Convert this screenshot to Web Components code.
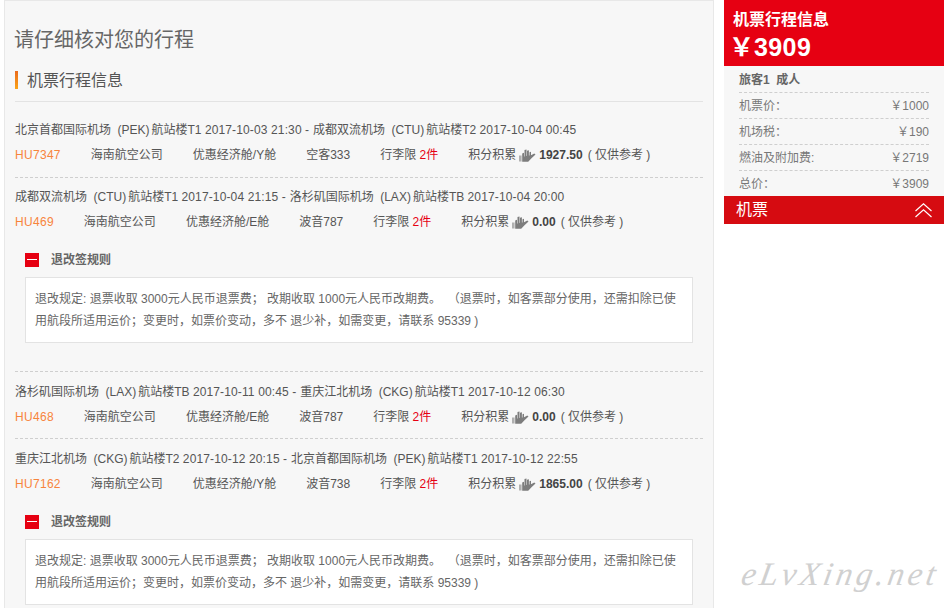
<!DOCTYPE html>
<html lang="zh-CN">
<head>
<meta charset="utf-8">
<style>
html,body{margin:0;padding:0;background:#fff;height:608px;overflow:hidden}
body{font:12px/24px "Liberation Sans","Noto Sans CJK SC",sans-serif;color:#555;text-spacing-trim:space-all}
</style>
</head>
<body>
<trip-page>
  <trip-panel slot="main">
    <flight-seg from="北京首都国际机场" fromcode="(PEK)" fromt="航站楼T1 2017-10-03 21:30 -" to="成都双流机场" tocode="(CTU)" tot="航站楼T2 2017-10-04 00:45" no="HU7347" cabin="优惠经济舱/Y舱" plane="空客333" miles="1927.50"></flight-seg>
    <flight-seg from="成都双流机场" fromcode="(CTU)" fromt="航站楼T1 2017-10-04 21:15 -" to="洛杉矶国际机场" tocode="(LAX)" tot="航站楼TB 2017-10-04 20:00" no="HU469" cabin="优惠经济舱/E舱" plane="波音787" miles="0.00">
      <rule-box></rule-box>
    </flight-seg>
    <flight-seg style="--pt:8px;--end:9px" from="洛杉矶国际机场" fromcode="(LAX)" fromt="航站楼TB 2017-10-11 00:45 -" to="重庆江北机场" tocode="(CKG)" tot="航站楼T1 2017-10-12 06:30" no="HU468" cabin="优惠经济舱/E舱" plane="波音787" miles="0.00"></flight-seg>
    <flight-seg style="--pt:8px" from="重庆江北机场" fromcode="(CKG)" fromt="航站楼T2 2017-10-12 20:15 -" to="北京首都国际机场" tocode="(PEK)" tot="航站楼T1 2017-10-12 22:55" no="HU7162" cabin="优惠经济舱/Y舱" plane="波音738" miles="1865.00">
      <rule-box></rule-box>
    </flight-seg>
  </trip-panel>
  <price-side slot="side">
    <price-row label="机票价：" value="￥1000"></price-row>
    <price-row label="机场税：" value="￥190"></price-row>
    <price-row label="燃油及附加费:" value="￥2719"></price-row>
    <price-row label="总价：" value="￥3909"></price-row>
  </price-side>
  <water-mark slot="mark"></water-mark>
</trip-page>
<script>
function def(name, html){
  customElements.define(name, class extends HTMLElement{
    connectedCallback(){
      if(this.shadowRoot) return;
      const a = k => this.getAttribute(k) || '';
      this.attachShadow({mode:'open'}).innerHTML = html(a, this);
    }
  });
}
const dated = s => s.replace(/(\d{4}-.*)$/, '<em>$1</em>');
def('trip-page', () => `<style>
:host{display:flex;align-items:flex-start;padding-left:4px;width:947px;height:608px;overflow:hidden;box-sizing:border-box;position:relative}
.m{flex:none;width:710px}.s{flex:none;width:220px;margin-left:10px}
</style><div class="m"><slot name="main"></slot></div><div class="s"><slot name="side"></slot></div><slot name="mark"></slot>`);

def('trip-panel', () => `<style>
:host{display:block;box-sizing:border-box;width:710px;height:608px;background:#f7f7f7;border:1px solid #e8e8e8;border-bottom:0;padding:22px 10px 0}
h1{margin:0;padding-top:1px;height:32px;box-sizing:border-box;font-weight:400;font-size:20px;line-height:32px;color:#666;margin-left:-1px}
h2{margin:16px 0 0;padding:0 0 12px;font-weight:400;font-size:16px;line-height:18px;color:#555;border-bottom:1px solid #e3e3e3;display:flex;align-items:center}
h2 i{display:block;width:3px;height:18px;margin-right:9px;background:linear-gradient(#ea6a1c,#fba419)}
h2 span{padding-top:2px;height:18px;box-sizing:border-box;line-height:16px;margin-top:0}
.gap{height:9px}
</style><h1>请仔细核对您的行程</h1><h2><i></i><span>机票行程信息</span></h2><div class="gap"></div><slot></slot>`);

def('flight-seg', a => `<style>
:host{display:block;padding-top:var(--pt,7px);border-bottom:1px dashed #cfcfcf}
:host(:last-child){border-bottom:0}
.r{display:flex;line-height:24px;white-space:nowrap;color:#555}
.r b{font-weight:400;margin:0 2px 0 6.500px}
.r u{text-decoration:none;margin-right:4px}
.r em{font-style:normal;letter-spacing:.13px}
.i{display:flex;gap:30px;line-height:24px;padding-top:1px;white-space:nowrap;color:#555}
.no{color:#f7843c;letter-spacing:.3px}
.red{color:#e60012}
.pts{display:flex;align-items:center}
.pts svg{margin:0 3px 0 3px;flex:none}
.pts strong{font-weight:700;color:#444;margin-right:5px}
.end{height:var(--end,10px)}
</style>
<div class="r"><span>${a('from')}</span><b>${a('fromcode')}</b><u>${dated(a('fromt').replace(/ -$/,''))} -</u><span>${a('to')}</span><b>${a('tocode')}</b><span>${dated(a('tot'))}</span></div>
<div class="i"><span class="no">${a('no')}</span><span>海南航空公司</span><span>${a('cabin')}</span><span>${a('plane')}</span><span>行李限 <span class="red">2件</span></span>
<span class="pts">积分积累<svg width="17" height="13" viewBox="0 0 17 13"><path fill="#b0b0b0" d="M0 6.500h2.600v6H0z"/><path fill="#7d7d7d" d="M3.200 12.800V4.400L5 3.800v3.700l.5-.1V1l2-.6v6.500l.5-.1V1.800l1.900-.5v5.300l.6-.2V3.300l1.500-.5v3.500l3.300-1.700 1.200.8-4 3.800-3.300 3.600z"/></svg><strong>${a('miles')}</strong>( 仅供参考 )</span></div>
<slot></slot><div class="end"></div>`);

def('rule-box', () => `<style>
:host{display:block;padding:14px 10px 0;margin-bottom:18px}
.h{display:flex;align-items:center;height:24px;font-weight:700;color:#666;margin-bottom:5px}
.h i{display:flex;align-items:center;justify-content:center;box-sizing:border-box;width:14px;height:14px;padding-bottom:1px;background:#e60012;margin-right:12px}
.h i::after{content:"";display:block;width:10px;height:1px;background:#fff}
.b{box-sizing:border-box;height:66px;background:#fff;border:1px solid #e3e3e3;padding:10px 9px;line-height:22px;color:#666}
</style><div class="h"><i></i>退改签规则</div>
<div class="b">退改规定: 退票收取 3000元人民币退票费； 改期收取 1000元人民币改期费。&nbsp;&nbsp;（退票时，如客票部分使用，还需扣除已使用航段所适用运价；变更时，如票价变动，多不 退少补，如需变更，请联系 95339 )</div>`);

def('price-side', () => `<style>
:host{display:block;width:220px}
.t{background:#e60012;color:#fff;height:66px;box-sizing:border-box;padding:8px 9px 0;font-weight:700}
.t div{font-size:16px;line-height:24px}
.t p{margin:0;font-size:25px;line-height:30px;display:flex;letter-spacing:.4px}
.t p span{margin:0 0 0 -4px;letter-spacing:0}
.b{background:#f7f7f7;height:130px;box-sizing:border-box;padding:0 15px}
.p{font-weight:700;color:#666;height:26px;line-height:28px}
.f{display:flex;align-items:center;justify-content:space-between;height:28px;background:#d60b11;color:#fff;font-size:16px;padding:0 12px}
</style><div class="t"><div>机票行程信息</div><p><span>￥</span>3909</p></div>
<div class="b"><div class="p">旅客1&nbsp; 成人</div><slot></slot></div>
<div class="f"><span>机票</span><svg width="17" height="15" viewBox="0 0 17 15" fill="none" stroke="#fff" stroke-width="1.200"><path d="M.500 8 8.500 .800 16.500 8M.500 14 8.500 6.800 16.500 14"/></svg></div>`);

def('price-row', a => `<style>
:host{display:flex;justify-content:space-between;box-sizing:border-box;height:26px;line-height:27px;border-top:1px dashed #cfcfcf;color:#777}
</style><span>${a('label')}</span><span>${a('value')}</span>`);

def('water-mark', () => `<style>
:host{position:absolute;left:742px;top:552px;font:italic 33px/44px "Liberation Serif",serif;color:#d0d0d0;letter-spacing:3.500px;white-space:nowrap;transform:skewX(-10deg)}
</style>eLvXing.net`);
</script>
</body>
</html>
